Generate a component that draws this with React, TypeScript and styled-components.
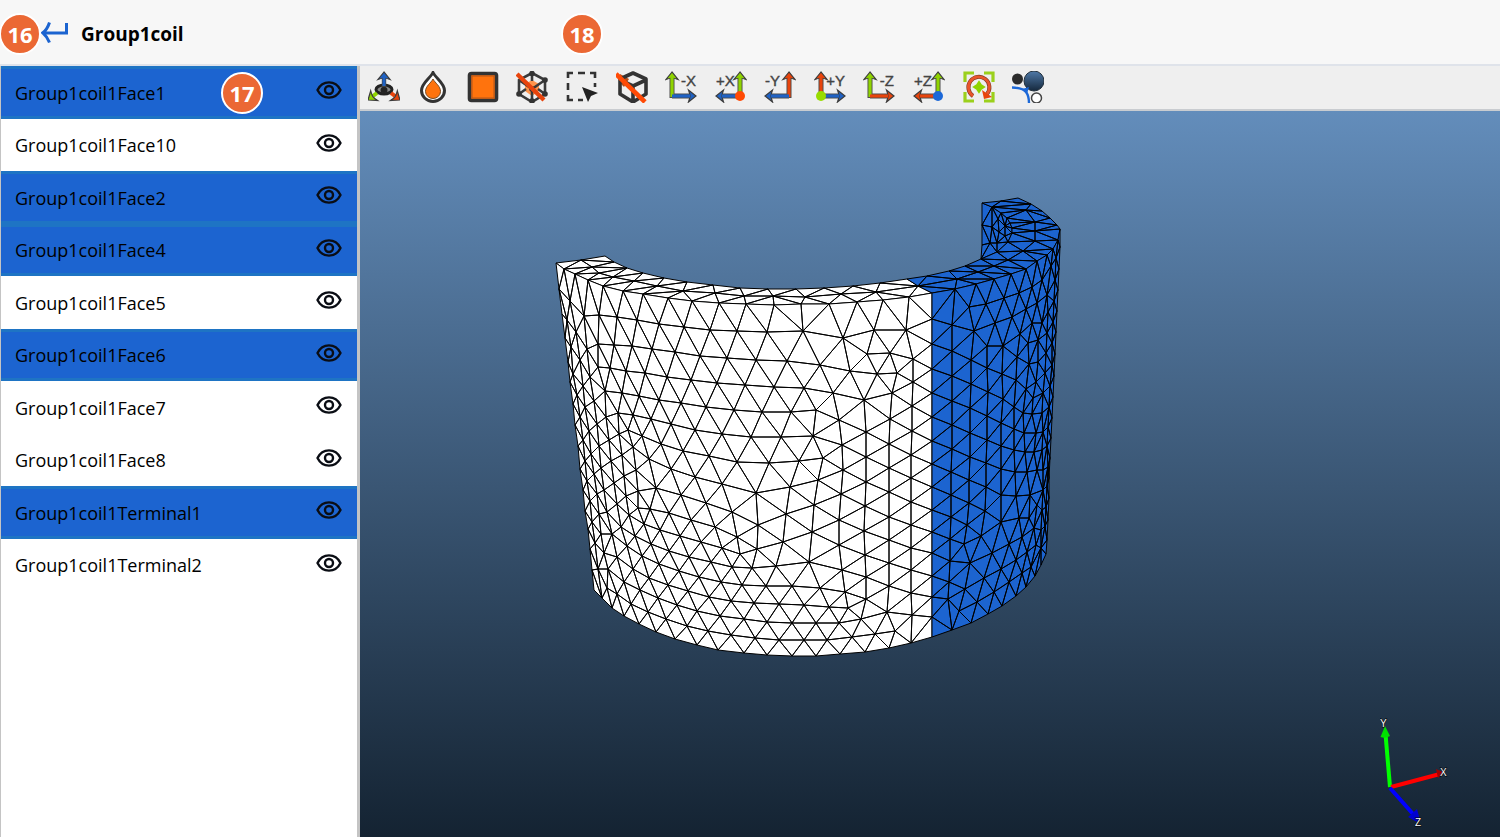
import React, { useState } from "react";
import styled, { createGlobalStyle } from "styled-components";

type Pt = [number, number];

const GlobalStyle = createGlobalStyle`
  * { box-sizing: border-box; }
  body { margin: 0; font-family: "Open Sans", "Noto Sans", sans-serif; color: #000; background: #fff; }
  button { font: inherit; color: inherit; border: 0; background: none; padding: 0; cursor: pointer; }
`;

/* ---------- layout ---------- */

const Page = styled.div`
  display: grid;
  grid-template-rows: auto 1fr;
  min-height: 100vh;
`;

const Header = styled.header`
  position: relative;
  display: flex;
  align-items: center;
  gap: 12px;
  height: 66px;
  padding: 4px 0 0 41px;
  background: #f7f7f7;
  border-bottom: 2px solid #dfe3ea;
`;

const BackButton = styled.button`
  display: flex;
  width: 28px;
  height: 28px;
`;

const Title = styled.h1`
  margin: 0;
  font-size: 19px;
  line-height: 28px;
  font-weight: 700;
`;

const Badge = styled.span<{ $left: number; $top: number }>`
  position: absolute;
  left: ${(p) => p.$left}px;
  top: ${(p) => p.$top}px;
  width: 42px;
  height: 42px;
  border: 2px solid #fff;
  border-radius: 50%;
  background: #eb6834;
  color: #fff;
  font-size: 22px;
  line-height: 38px;
  font-weight: 700;
  text-align: center;
  pointer-events: none;
`;

const Body = styled.div`
  display: grid;
  grid-template-columns: 360px 1fr;
`;

const Sidebar = styled.aside`
  border-left: 1px solid #c4c4c4;
  border-right: 3px solid #c4c4c4;
  background: #fff;
`;

const FaceList = styled.ul`
  display: grid;
  grid-auto-rows: 1fr;
  height: 525px;
  margin: 0;
  padding: 0;
  list-style: none;
`;

const FaceRow = styled.li<{ $selected: boolean }>`
  position: relative;
  display: flex;
  align-items: center;
  border: solid ${(p) => (p.$selected ? "#1e74c4" : "#fff")};
  border-width: 3px 0;
  background: ${(p) => (p.$selected ? "#1c64d0" : "#fff")};
`;

const FaceName = styled.button`
  flex: 1;
  padding: 1px 0 0 14px;
  text-align: left;
  font-size: 18px;
  line-height: 28px;
`;

const EyeButton = styled.button`
  display: flex;
  margin: 0 15px 4px 0;
`;

const Workspace = styled.main`
  display: grid;
  grid-template-rows: auto 1fr;
  min-width: 0;
`;

const Toolbar = styled.div`
  height: 45px;
  padding-top: 5px;
  background: #efefef;
  border-bottom: 2px solid #c9ccd0;
`;

const Tools = styled.div`
  display: grid;
  grid-template-columns: repeat(14, 1fr);
  width: 694px;
  margin-left: -1px;
`;

const ToolButton = styled.button`
  display: flex;
  justify-content: center;
`;

const Viewport = styled.section`
  position: relative;
  background: linear-gradient(#638dbb, #142332);
`;

const Scene = styled.svg`
  display: block;
  position: absolute;
  inset: 0;
  width: 100%;
  height: 100%;
`;

const Triad = styled.svg`
  position: absolute;
  right: 40px;
  bottom: 7px;
`;

/* ---------- mesh ---------- */

const pts = (s: string): Pt[] =>
  s.trim().split(/\s+/).map((p) => p.split(",").map(Number) as Pt);

const insidePolygon = ([x, y]: Pt, poly: Pt[]) => {
  let inside = false;
  for (let i = 0, j = poly.length - 1; i < poly.length; j = i++) {
    const [xi, yi] = poly[i];
    const [xj, yj] = poly[j];
    if (yi > y !== yj > y && x < ((xj - xi) * (y - yi)) / (yj - yi) + xi) inside = !inside;
  }
  return inside;
};

/** Bowyer-Watson triangulation; returns index triples. */
function delaunay(points: Pt[]): number[][] {
  const n = points.length;
  const all: Pt[] = [...points, [-20000, -20000], [20000, -20000], [0, 30000]];
  const circle = (t: number[]) => {
    const [[ax, ay], [bx, by], [cx, cy]] = t.map((i) => all[i]);
    const d = 2 * (ax * (by - cy) + bx * (cy - ay) + cx * (ay - by)) || 1e-9;
    const a = ax * ax + ay * ay;
    const b = bx * bx + by * by;
    const c = cx * cx + cy * cy;
    const x = (a * (by - cy) + b * (cy - ay) + c * (ay - by)) / d;
    const y = (a * (cx - bx) + b * (ax - cx) + c * (bx - ax)) / d;
    return { t, x, y, r: (ax - x) ** 2 + (ay - y) ** 2 };
  };
  let tris = [circle([n, n + 1, n + 2])];
  for (let i = 0; i < n; i++) {
    const [x, y] = all[i];
    const edges = new Map<string, [number, number]>();
    tris = tris.filter((c) => {
      if ((x - c.x) ** 2 + (y - c.y) ** 2 >= c.r) return true;
      for (let k = 0; k < 3; k++) {
        const a = c.t[k];
        const b = c.t[(k + 1) % 3];
        const key = a < b ? `${a}-${b}` : `${b}-${a}`;
        if (edges.has(key)) edges.delete(key);
        else edges.set(key, [a, b]);
      }
      return false;
    });
    edges.forEach(([a, b]) => tris.push(circle([a, b, i])));
  }
  return tris.map((c) => c.t).filter((t) => t.every((i) => i < n));
}

/** Path of all triangle edges of a face, triangulated in its unrolled plane. */
function meshPath(outline: Pt[], inner: Pt[], unroll: (p: Pt) => Pt) {
  const all = [...outline, ...inner];
  const flat = all.map(unroll);
  const rim = flat.slice(0, outline.length);
  return delaunay(flat)
    .filter((t) => {
      const c: Pt = [
        t.reduce((s, i) => s + flat[i][0], 0) / 3,
        t.reduce((s, i) => s + flat[i][1], 0) / 3,
      ];
      return insidePolygon(c, rim);
    })
    .map((t) => `M${t.map((i) => all[i].join(" ")).join("L")}Z`)
    .join("");
}

const unrollCylinder = ([x, y]: Pt): Pt => {
  const k = (y - 263) / 327;
  const left = 556 + 38 * k;
  const right = 1060 - 13 * k;
  const r = ((right - left) / 2) * 1.03;
  const s = Math.max(-0.999, Math.min(0.999, (x - (left + right) / 2) / r));
  return [r * Math.asin(s), y - (75 + 32 * k) * Math.sqrt(1 - s * s) + 17 * s];
};
const unrollRing = ([x, y]: Pt): Pt => [x, y * 3.6];
const unrollWall = ([x, y]: Pt): Pt => [x * 2, y];

const frontWhite = {
  outline: pts(`
    556,263 564,269 575,274 588,280 603,286 623,291 643,294 668,298 692,301 719,303 746,304 774,305 801,304
    829,304 857,302 883,300 909,297 932,293 932,319 932,344 932,369 932,393 932,417 932,441 932,464 932,487
    932,510 932,532 932,553 932,576 932,597 932,617 932,637 911,643 889,648 865,652 840,654 816,656 792,656
    767,655 744,653 718,650 697,645 675,639 656,632 639,624 624,616 612,608 602,598 594,590 592,570 590,549
    588,529 585,511 583,490 580,469 578,446 575,425 573,404 570,382 568,362 565,338 562,314 559,289`),
  inner: pts(`
    567,320 571,347 573,374 577,395 580,417 583,440 585,461 587,481 590,501 592,522 595,543
    570,301 576,332 580,360 583,386 585,407 589,431 591,454 594,474 597,494 599,514 601,534 604,553
    584,316 587,349 590,377 594,401 597,424 599,446 601,468 604,490 607,512 612,534 617,557
    598,344 598,367 605,391 606,417 609,440 611,461 614,483 617,504 621,527 627,546 633,569
    618,413 619,434 622,455 624,476 626,496 638,508 628,430 633,447 636,470 638,491 629,515
    608,569 607,588 598,569 617,594 624,582 631,604 640,590 648,612 649,578 658,598 666,619
    599,315 617,317 637,320 659,324 684,327 710,330 737,331 767,332 803,331 843,338 874,330 906,330
    614,345 632,346 652,349 675,352 700,356 727,358 756,360 787,361 820,365 850,371 867,354 890,353
    877,374 897,373 913,359
    610,368 626,371 645,373 667,377 691,380 717,383 745,385 774,387 804,388 833,393 864,400 892,393 913,382
    622,393 639,396 659,400 681,403 706,407 734,410 762,412 791,412 816,410 839,420 866,432 890,419 912,406
    633,415 651,419 671,424 695,430 722,434 751,437 781,437 813,436 842,445 889,444 912,431
    642,436 661,444 683,451 709,456 737,462 769,463 799,461 823,458 843,470 866,457 889,468 911,455
    649,459 671,469 695,477 722,484 756,493 790,487 818,480 841,494 866,482 889,492 911,478
    656,488 681,495 706,503 732,512 758,525 786,514 814,505 839,520 865,506 889,517 911,502
    650,509 669,513 691,520 715,527 737,537 757,549 783,542 812,532 839,545 864,531 889,540 911,525
    644,524 660,530 680,536 701,542 722,548 740,554 752,568 776,566 809,562 842,570 865,555 889,563 911,548
    635,536 651,544 669,551 689,557 711,562 732,567 766,586 792,586 820,588 845,592 866,577 889,586 911,570
    642,556 659,564 679,571 699,577 721,582 742,585 668,585 688,591 709,597 731,601 754,603 779,604 804,605
    829,607 848,608 866,599 677,605 697,611 720,616 744,619 767,622 792,623 816,623 839,623 861,619 887,612
    911,593 687,626 708,631 731,635 755,638 779,640 804,640 827,640 852,637 875,634 895,631 912,615`),
};

const frontBlue = {
  outline: pts(`
    932,293 955,289 976,284 994,279 1011,274 1026,269 1037,261 1047,255 1053,249 1058,240 1060,229 1060,247
    1059,269 1058,290 1057,311 1056,332 1055,354 1054,376 1053,397 1052,418 1051,438 1050,458 1049,478
    1049,498 1048,520 1047,540 1046,554 1041,565 1035,576 1026,587 1016,596 1002,606 988,614 971,623
    952,630 932,637 932,617 932,597 932,576 932,553 932,532 932,510 932,487 932,464 932,441 932,417
    932,393 932,369 932,344 932,319`),
  inner: pts(`
    952,325 952,351 952,376 952,401 952,425 952,449 951,472 951,495 951,517 950,539 950,561 949,582 948,599
    959,611 969,307 974,331 971,360 971,384 970,408 970,433 970,457 969,480 969,503 967,525 964,544 970,563
    965,589 986,304 995,323 987,346 987,368 988,392 987,416 987,440 986,463 986,487 985,511 981,536 992,553
    984,578 977,602 1004,298 1012,317 1003,346 1002,374 1003,399 1001,423 1001,446 1001,469 1001,495 1001,522
    1009,544 1001,569 994,592 1019,293 1026,309 1020,334 1017,357 1016,380 1014,407 1014,429 1014,450
    1015,472 1016,496 1019,518 1022,537 1016,560 1009,582 1032,287 1032,323 1028,343 1029,364 1026,389
    1023,413 1024,433 1025,452 1027,472 1030,495 1029,518 1027,552 1022,573 1042,280 1037,303 1042,323
    1038,340 1038,362 1036,382 1033,398 1032,414 1036,433 1034,452 1037,470 1037,505 1034,528 1036,545
    1031,567 1051,266 1047,295 1048,312 1047,333 1046,353 1045,373 1043,393 1042,413 1043,432 1042,450
    1043,470 1043,490 1042,510 1041,530 1041,548 1056,258 1055,280 1054,301 1053,322 1052,343 1052,365
    1050,386 1049,407 1048,427 1047,446 1048,467 1047,486 1046,507 1045,526`),
};

const topWhite = {
  outline: pts(`
    556,263 581,260 605,256 614,262 627,268 643,273 664,278 687,282 713,285 740,288 768,289 796,289 824,288
    853,286 880,283 907,279 918,286 932,293 909,297 883,300 857,302 829,304 801,304 774,305 746,304 719,303
    692,301 668,298 643,294 623,291 603,286 588,280 575,274 564,269`),
  inner: pts(`592,267 599,273 613,277 634,281 657,286 683,291 715,293 744,296 773,296 805,297 841,294 876,292`),
};

const topBlue = {
  outline: pts(`
    932,293 955,289 976,284 994,279 1011,274 1026,269 1037,261 1047,255 1053,249 1058,240 1060,229 1057,225
    1050,218 1042,211 1031,204 1018,198 1001,201 982,203 992,207 1001,213 1007,218 1010,223 1012,228 1012,233
    1008,242 997,252 981,259 965,266 949,271 927,276 907,279 918,286`),
  inner: pts(`957,279 978,272 994,266 1008,260 1023,251 1035,241 1035,231 1035,222 1026,210`),
};

const endWall = {
  outline: pts(`
    982,203 992,207 1001,213 1007,218 1010,223 1012,228 1012,233 1008,242 997,252 981,259 982,245 982,225`),
  inner: pts(`992,227 990,243 998,219 999,232 1005,226 1005,236 997,243`),
};

const WHITE = "#ffffff";
const BLUE = "#1c64d0";
const faces = [
  { ...endWall, fill: BLUE, unroll: unrollWall },
  { ...topWhite, fill: WHITE, unroll: unrollRing },
  { ...topBlue, fill: BLUE, unroll: unrollRing },
  { ...frontWhite, fill: WHITE, unroll: unrollCylinder },
  { ...frontBlue, fill: BLUE, unroll: unrollCylinder },
].map((f) => ({
  fill: f.fill,
  shape: `M${f.outline.map((p) => p.join(" ")).join("L")}Z`,
  mesh: meshPath(f.outline, f.inner, f.unroll),
}));

const CoilScene = () => (
  <Scene viewBox="360 111 1140 726" role="img" aria-label="Coil surface mesh">
    {faces.map((f, i) => (
      <g key={i}>
        <path d={f.shape} fill={f.fill} />
        <path d={f.mesh} fill="none" stroke="#000" strokeWidth="1" strokeLinejoin="round" />
      </g>
    ))}
  </Scene>
);

const AxisTriad = () => (
  <Triad width="80" height="116" viewBox="1380 714 80 116" aria-hidden="true">
    <path d="M1390 787L1385.500 734" stroke="#00ff00" strokeWidth="4" />
    <path d="M1385 726l-4.500 11q5 2 9.500-1z" fill="#00e000" />
    <path d="M1391 787L1438 774.500" stroke="#ff0000" strokeWidth="4" />
    <path d="M1444 772.500l-8-3.500 2 9z" fill="#a00000" />
    <path d="M1390 788L1413 814" stroke="#0000ff" strokeWidth="4" />
    <path d="M1408 817l9-8 3 11-3 2z" fill="#0000d0" />
    <g fill="#fff" stroke="#000" strokeWidth="1" paintOrder="stroke" fontSize="10" fontFamily="Liberation Sans, sans-serif">
      <text x="1380" y="727">Y</text>
      <text x="1440" y="776">X</text>
      <text x="1415" y="826">Z</text>
    </g>
  </Triad>
);

/* ---------- icons ---------- */

const DARK = "#333333";
const GREEN = "#8fd400";
const RED = "#e8440c";
const NAVY = "#1f62c4";
const ORANGE = "#ff730d";

const Icon = ({ children }: { children: React.ReactNode }) => (
  <svg width="32" height="32" viewBox="0 0 32 32" fill="none" aria-hidden="true">
    {children}
  </svg>
);

const EyeIcon = () => (
  <svg width="26" height="18" viewBox="0 0 26 18" fill="none" stroke="#0a0d14" strokeWidth="2.400" aria-hidden="true">
    <path d="M1.500 9C4 4 8.500 1.400 13 1.400S22 4 24.500 9C22 14 17.500 16.600 13 16.600S4 14 1.500 9z" strokeLinejoin="round" />
    <circle cx="13" cy="9" r="4" />
  </svg>
);

const BackIcon = () => (
  <svg width="28" height="28" viewBox="0 0 28 28" fill="none" stroke="#1c64d0" strokeWidth="3" aria-hidden="true">
    <path d="M25.500 3V13H3M8.500 2.500C7 7 5 10.500 1.800 12.800C5 15.500 7 18.500 8.500 22.500" />
  </svg>
);

const ArrowHead = ({ x, y, angle, color }: { x: number; y: number; angle: number; color: string }) => (
  <path
    d="M0 0L-7.500 -6Q-6 -2 -6 0T-7.500 6z"
    transform={`translate(${x} ${y}) rotate(${angle})`}
    fill={color}
    stroke="#3c3c3c"
    strokeWidth="1.200"
  />
);

interface AxisProps {
  label: string;
  side: "left" | "right";
  up: string;
  across: string;
  dot?: string;
}

const AxisIcon = ({ label, side, up, across, dot }: AxisProps) => {
  const x = side === "left" ? 7 : 25;
  const tip = side === "left" ? 31 : 1;
  const inner = side === "left" ? 25 : 7;
  return (
    <Icon>
      <path d={`M${x} 27V6`} stroke="#4a4a4a" strokeWidth="5" />
      <path d={`M${x} 25H${inner}`} stroke="#4a4a4a" strokeWidth="5" />
      <ArrowHead x={x} y={1} angle={-90} color={up} />
      <ArrowHead x={tip} y={25} angle={side === "left" ? 0 : 180} color={across} />
      <path d={`M${x} 26V5`} stroke={up} strokeWidth="3.200" />
      <path d={`M${x} 25H${inner}`} stroke={across} strokeWidth="3.200" />
      {dot && <circle cx={x} cy="25" r="5" fill={dot} />}
      <text
        x={side === "left" ? 31 : 1}
        y="15"
        textAnchor={side === "left" ? "end" : "start"}
        fill="#444"
        stroke="#444"
        strokeWidth="0.400"
        fontSize="15"
        fontFamily="Liberation Sans, sans-serif"
      >
        {label}
      </text>
    </Icon>
  );
};

const tools: { name: string; icon: React.ReactNode }[] = [
  {
    name: "Orbit view",
    icon: (
      <Icon>
        <ellipse cx="16" cy="18.500" rx="8" ry="4.500" fill="#888" stroke="#222" strokeWidth="3" />
        <path d="M16 18V6" stroke="#444" strokeWidth="4.400" />
        <ArrowHead x={16} y={1} angle={-90} color={NAVY} />
        <path d="M16 15V5" stroke={NAVY} strokeWidth="3" />
        <ellipse cx="16" cy="19" rx="3.500" ry="3" fill="#222" />
        <path d="M9 22l-4 3" stroke={GREEN} strokeWidth="4" />
        <ArrowHead x={0} y={29} angle={145} color={GREEN} />
        <path d="M23 22l4 3" stroke={RED} strokeWidth="4" />
        <ArrowHead x={32} y={29} angle={35} color={RED} />
      </Icon>
    ),
  },
  {
    name: "Opacity",
    icon: (
      <Icon>
        <path d="M16 1.500C13.500 7 4.500 12 4.500 19.500a11.500 11 0 0 0 23 0C27.500 12 18.500 7 16 1.500z" fill="#fff" stroke={DARK} strokeWidth="3" />
        <path d="M16 8C14 12 8.500 15 8.500 20.500a7.500 7 0 0 0 15 0C23.500 15 18 12 16 8z" fill={ORANGE} stroke="#7a4a20" strokeWidth="1" />
      </Icon>
    ),
  },
  {
    name: "Surface",
    icon: (
      <Icon>
        <rect x="2.500" y="2.500" width="27" height="27" rx="2" fill={ORANGE} stroke={DARK} strokeWidth="3.600" />
        <rect x="5" y="5" width="22" height="22" stroke="#b5561a" strokeWidth="1" />
      </Icon>
    ),
  },
  {
    name: "Hide wireframe",
    icon: (
      <Icon>
        <path d="M16 9l7 4v7l-7 5-7-5v-7z" fill="#ff8a3a" opacity="0.900" />
        <path d="M16 2L29 9V23L16 31L3 23V9zM16 18V31M16 18L29 9M16 18L3 9M16 2v8M3 23l7-5M29 23l-7-5" stroke="#3a3a3a" strokeWidth="2.600" />
        <g fill="#333">
          <circle cx="16" cy="2.500" r="2.800" />
          <circle cx="29" cy="9" r="2.800" />
          <circle cx="29" cy="23" r="2.800" />
          <circle cx="16" cy="30" r="2.800" />
          <circle cx="3" cy="23" r="2.800" />
          <circle cx="16" cy="18" r="2.800" />
        </g>
        <path d="M1 3L28 29" stroke={RED} strokeWidth="4.400" />
      </Icon>
    ),
  },
  {
    name: "Box select",
    icon: (
      <Icon>
        <path d="M2 7V2H7M12 2h7M24 2h5v5M2 12v7M2 24v5h5M12 29h5M29 12v4" stroke="#333" strokeWidth="2.600" />
        <path d="M16 16L32 22L25 25L22 31z" fill="#222" />
      </Icon>
    ),
  },
  {
    name: "Hide solid",
    icon: (
      <Icon>
        <path d="M4 3l9 5-5 8-5-5z" fill="#b5501c" />
        <path d="M17 2L30 8V23L17 31L4 23V8zM4 9L17 15L30 9M17 15V31" stroke={DARK} strokeWidth="3.600" strokeLinejoin="round" />
        <path d="M0 3L29 31" stroke="#ff4a05" strokeWidth="4.600" />
      </Icon>
    ),
  },
  { name: "View -X", icon: <AxisIcon label="-X" side="left" up={GREEN} across={NAVY} /> },
  { name: "View +X", icon: <AxisIcon label="+X" side="right" up={GREEN} across={NAVY} dot="#ff4a05" /> },
  { name: "View -Y", icon: <AxisIcon label="-Y" side="right" up={RED} across={NAVY} /> },
  { name: "View +Y", icon: <AxisIcon label="+Y" side="left" up={RED} across={NAVY} dot="#98dc00" /> },
  { name: "View -Z", icon: <AxisIcon label="-Z" side="left" up={GREEN} across={RED} /> },
  { name: "View +Z", icon: <AxisIcon label="+Z" side="right" up={GREEN} across={RED} dot="#1c68d8" /> },
  {
    name: "Fit view",
    icon: (
      <Icon>
        <path d="M2 11V2H11M21 2h9v9M2 21v9h9M21 30h9v-9" stroke="#9bd01c" strokeWidth="3.200" />
        <path d="M10 25A10.500 10.500 0 1 1 24 23" stroke="#7a3a20" strokeWidth="4" />
        <path d="M10 25A10.500 10.500 0 1 1 24 23" stroke="#e8552c" strokeWidth="2.800" />
        <path d="M19 19l2 9 8-2z" fill="#e8440c" />
        <path d="M16 11l2 3 3 2-3 2-2 3-2-3-3-2 3-2z" fill={GREEN} stroke={GREEN} strokeWidth="2" />
      </Icon>
    ),
  },
  {
    name: "Appearance",
    icon: (
      <Icon>
        <defs>
          <linearGradient id="ball" x1="0" y1="0" x2="0" y2="1">
            <stop offset="0" stopColor="#4f79a8" />
            <stop offset="1" stopColor="#15283c" />
          </linearGradient>
        </defs>
        <circle cx="5.500" cy="8" r="5.500" fill="#2b2b2b" />
        <circle cx="22" cy="10" r="10" fill="url(#ball)" stroke="#23303c" strokeWidth="1" />
        <path d="M0 16.500Q11 17 14 21Q17 25 17 32" stroke="#1c68d8" strokeWidth="2.400" />
        <path d="M10 18l7-2-2 7z" fill="#1c68d8" />
        <circle cx="24.500" cy="27" r="5" fill="#fff" stroke="#444" strokeWidth="1.500" />
      </Icon>
    ),
  },
];

/* ---------- app ---------- */

const faceNames = [
  "Group1coil1Face1",
  "Group1coil1Face10",
  "Group1coil1Face2",
  "Group1coil1Face4",
  "Group1coil1Face5",
  "Group1coil1Face6",
  "Group1coil1Face7",
  "Group1coil1Face8",
  "Group1coil1Terminal1",
  "Group1coil1Terminal2",
];

export default function App() {
  const [selected, setSelected] = useState<string[]>([
    "Group1coil1Face1",
    "Group1coil1Face2",
    "Group1coil1Face4",
    "Group1coil1Face6",
    "Group1coil1Terminal1",
  ]);
  const toggle = (name: string) =>
    setSelected((s) => (s.includes(name) ? s.filter((n) => n !== name) : [...s, name]));

  return (
    <Page>
      <GlobalStyle />
      <Header>
        <BackButton aria-label="Back">
          <BackIcon />
        </BackButton>
        <Title>Group1coil</Title>
        <Badge $left={-1} $top={13}>16</Badge>
        <Badge $left={561} $top={13}>18</Badge>
      </Header>
      <Body>
        <Sidebar>
          <FaceList>
            {faceNames.map((name, i) => (
              <FaceRow key={name} $selected={selected.includes(name)}>
                <FaceName aria-pressed={selected.includes(name)} onClick={() => toggle(name)}>
                  {name}
                </FaceName>
                <EyeButton aria-label={`Toggle visibility of ${name}`}>
                  <EyeIcon />
                </EyeButton>
                {i === 0 && <Badge $left={220} $top={3}>17</Badge>}
              </FaceRow>
            ))}
          </FaceList>
        </Sidebar>
        <Workspace>
          <Toolbar>
            <Tools role="toolbar" aria-label="View tools">
              {tools.map((t) => (
                <ToolButton key={t.name} aria-label={t.name}>
                  {t.icon}
                </ToolButton>
              ))}
            </Tools>
          </Toolbar>
          <Viewport>
            <CoilScene />
            <AxisTriad />
          </Viewport>
        </Workspace>
      </Body>
    </Page>
  );
}
